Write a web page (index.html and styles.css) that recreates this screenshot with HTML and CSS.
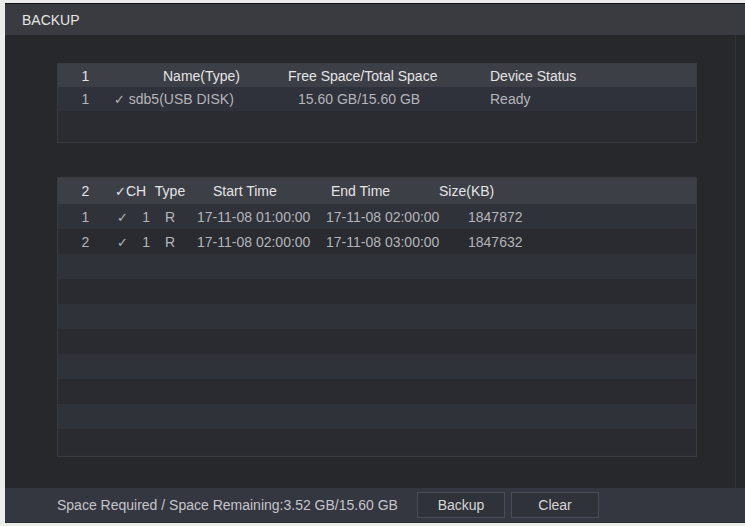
FILE: index.html
```html
<!DOCTYPE html>
<html lang="en">
<head>
    <meta charset="UTF-8">
    <meta name="viewport" content="width=device-width, initial-scale=1.0">
    <title>Backup</title>
    <link rel="stylesheet" href="styles.css">
</head>
<body>
    <div class="window">
        <div class="titlebar">BACKUP</div>

        <div class="content">
            <!-- device list -->
            <div class="table devices">
                <div class="row head">
                    <span class="c-idx">1</span>
                    <span class="c-name">Name(Type)</span>
                    <span class="c-space">Free Space/Total Space</span>
                    <span class="c-status">Device Status</span>
                </div>
                <div class="row odd">
                    <span class="c-idx">1</span>
                    <span class="c-name"><span class="tick">✓</span> sdb5(USB DISK)</span>
                    <span class="c-space">15.60 GB/15.60 GB</span>
                    <span class="c-status">Ready</span>
                </div>
            </div>

            <!-- record files -->
            <div class="table files">
                <div class="row head">
                    <span class="c-idx">2</span>
                    <span class="c-chk"><span class="tick">✓</span>CH</span>
                    <span class="c-type">Type</span>
                    <span class="c-start">Start Time</span>
                    <span class="c-end">End Time</span>
                    <span class="c-size">Size(KB)</span>
                </div>
                <div class="row odd">
                    <span class="c-idx">1</span>
                    <span class="c-chk"><span class="tick">✓</span></span>
                    <span class="c-ch">1</span>
                    <span class="c-type">R</span>
                    <span class="c-start">17-11-08 01:00:00</span>
                    <span class="c-end">17-11-08 02:00:00</span>
                    <span class="c-size">1847872</span>
                </div>
                <div class="row even">
                    <span class="c-idx">2</span>
                    <span class="c-chk"><span class="tick">✓</span></span>
                    <span class="c-ch">1</span>
                    <span class="c-type">R</span>
                    <span class="c-start">17-11-08 02:00:00</span>
                    <span class="c-end">17-11-08 03:00:00</span>
                    <span class="c-size">1847632</span>
                </div>
                <div class="row odd"></div>
                <div class="row even"></div>
                <div class="row odd"></div>
                <div class="row even"></div>
                <div class="row odd"></div>
                <div class="row even"></div>
                <div class="row odd"></div>
                <div class="row even"></div>
            </div>
        </div>

        <div class="footer">
            <span class="space-info">Space Required / Space Remaining:3.52 GB/15.60 GB</span>
            <button class="btn">Backup</button>
            <button class="btn">Clear</button>
        </div>
    </div>
</body>
</html>
```

FILE: styles.css
```css
body {
    margin: 0;
    padding: 3px 0 3px 5px;
    background-color: #ececec;
    font-family: "Liberation Sans", Arial, "DejaVu Sans", sans-serif;
    font-size: 14px;
}

.window {
    width: 740px;
    height: 520px;
    background-color: #26282c;
    border-top: 1px solid #111214;
    box-sizing: border-box;
    display: flex;
    flex-direction: column;
}

.titlebar {
    height: 31px;
    background-color: #3a3b40;
    color: #e6e6e6;
    padding: 8px 0 0 17px;
    box-sizing: border-box;
}

.content {
    flex: 1;
    padding: 28px 0 0 52px;
    margin-right: 9px;
    border-right: 1px solid #323438;
}

.table {
    width: 640px;
    border: 1px solid #393b41;
    box-sizing: border-box;
    background-color: #2a2c31;
}

.devices {
    height: 80px;
}

.files {
    height: 280px;
    margin-top: 34px;
}

.row {
    display: flex;
    align-items: center;
    height: 25px;
    color: #b4b5ba;
    white-space: nowrap;
}

.row.head {
    background-color: #3d3f46;
    color: #e4e4e6;
}

.devices .row.head {
    height: 23px;
}

.devices .row.odd {
    height: 24px;
    background-color: #30323b;
}

.files .row.head {
    height: 26px;
}

.files .row.odd {
    background-color: #30323a;
}

.files .row.even {
    background-color: #292b30;
}

.tick {
    font-family: "DejaVu Sans", sans-serif;
    font-size: 13px;
}

.c-idx {
    width: 55px;
    text-align: center;
    flex-shrink: 0;
}

/* device table columns */
.c-name {
    width: 175px;
    padding-left: 1px;
    box-sizing: border-box;
}

.head .c-name {
    padding-left: 50px;
}

.c-space {
    width: 202px;
    padding-left: 10px;
    box-sizing: border-box;
}

.head .c-space {
    padding-left: 0;
}

/* file table columns */
.c-chk {
    width: 26px;
    padding-left: 4px;
    box-sizing: border-box;
}

.head .c-chk {
    width: 37px;
    padding-left: 2px;
}

.c-ch {
    width: 11px;
    text-align: right;
}

.c-type {
    width: 40px;
    text-align: center;
}

.c-start {
    width: 132px;
    padding-left: 7px;
    box-sizing: border-box;
}

.head .c-start {
    padding-left: 23px;
}

.c-end {
    width: 138px;
    padding-left: 4px;
    box-sizing: border-box;
}

.head .c-end {
    width: 117px;
    padding-left: 9px;
}

.c-size {
    padding-left: 8px;
}

.head .c-size {
    padding-left: 0;
}

.footer {
    height: 35px;
    background-color: #343640;
    display: flex;
    align-items: center;
    padding-left: 52px;
    border-bottom: 1px solid #2a2b30;
    box-sizing: border-box;
}

.space-info {
    width: 360px;
    color: #c4c5ca;
    white-space: nowrap;
}

.btn {
    width: 88px;
    height: 26px;
    margin-right: 6px;
    background-color: #30323a;
    border: 1px solid #4b4d56;
    color: #d6d6d8;
    font-family: "Liberation Sans", Arial, sans-serif;
    font-size: 14px;
    padding: 0;
}
```
